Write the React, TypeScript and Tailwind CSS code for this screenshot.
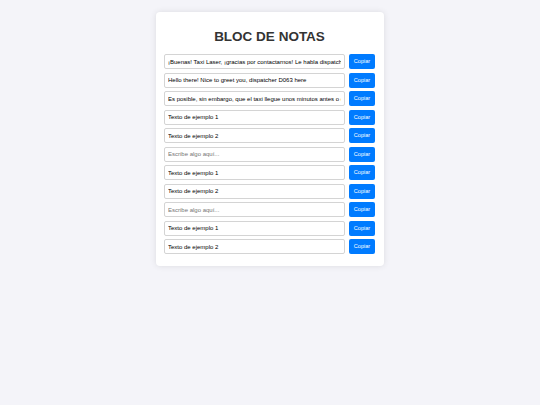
import { useState } from 'react'

const initialNotes = [
  '¡Buenas! Taxi Laser, ¡gracias por contactarnos! Le habla dispatcher D063, ¿en qué le puedo ayudar?',
  'Hello there! Nice to greet you, dispatcher D063 here',
  'Es posible, sin embargo, que el taxi llegue unos minutos antes o después de la hora indicada',
  'Texto de ejemplo 1',
  'Texto de ejemplo 2',
  '',
  'Texto de ejemplo 1',
  'Texto de ejemplo 2',
  '',
  'Texto de ejemplo 1',
  'Texto de ejemplo 2',
]

function NoteRow({ value, onChange }: { value: string; onChange: (v: string) => void }) {
  return (
    <div className="flex items-center gap-[4px]">
      <input
        className="h-[15px] min-w-0 flex-1 rounded-[2px] border border-[#d4d4d4] bg-white px-[3px] text-[6px] text-black outline-none placeholder:text-[#757575]"
        value={value}
        placeholder="Escribe algo aquí..."
        onChange={(e) => onChange(e.target.value)}
      />
      <button
        className="h-[15px] w-[26px] shrink-0 rounded-[2px] bg-[#007bff] text-[5.6px] text-white"
        onClick={() => navigator.clipboard?.writeText(value)}
      >
        Copiar
      </button>
    </div>
  )
}

export default function App() {
  const [notes, setNotes] = useState(initialNotes)

  return (
    <div className="min-h-screen bg-[#f4f4f9] pt-[12px] font-['Liberation_Sans',Arial,sans-serif]">
      <div className="mx-auto w-[228px] rounded-[4px] bg-white pb-[12px] pl-[8px] pr-[9px] pt-[16px] shadow-[0_0_6px_rgba(0,0,0,0.1)]">
        <h1 className="mb-[9px] text-center text-[13.5px] font-bold leading-[17px] text-[#333333]">BLOC DE NOTAS</h1>
        <div className="flex flex-col gap-[3.5px]">
          {notes.map((note, index) => (
            <NoteRow
              key={index}
              value={note}
              onChange={(v) => setNotes((prev) => prev.map((n, i) => (i === index ? v : n)))}
            />
          ))}
        </div>
      </div>
    </div>
  )
}
